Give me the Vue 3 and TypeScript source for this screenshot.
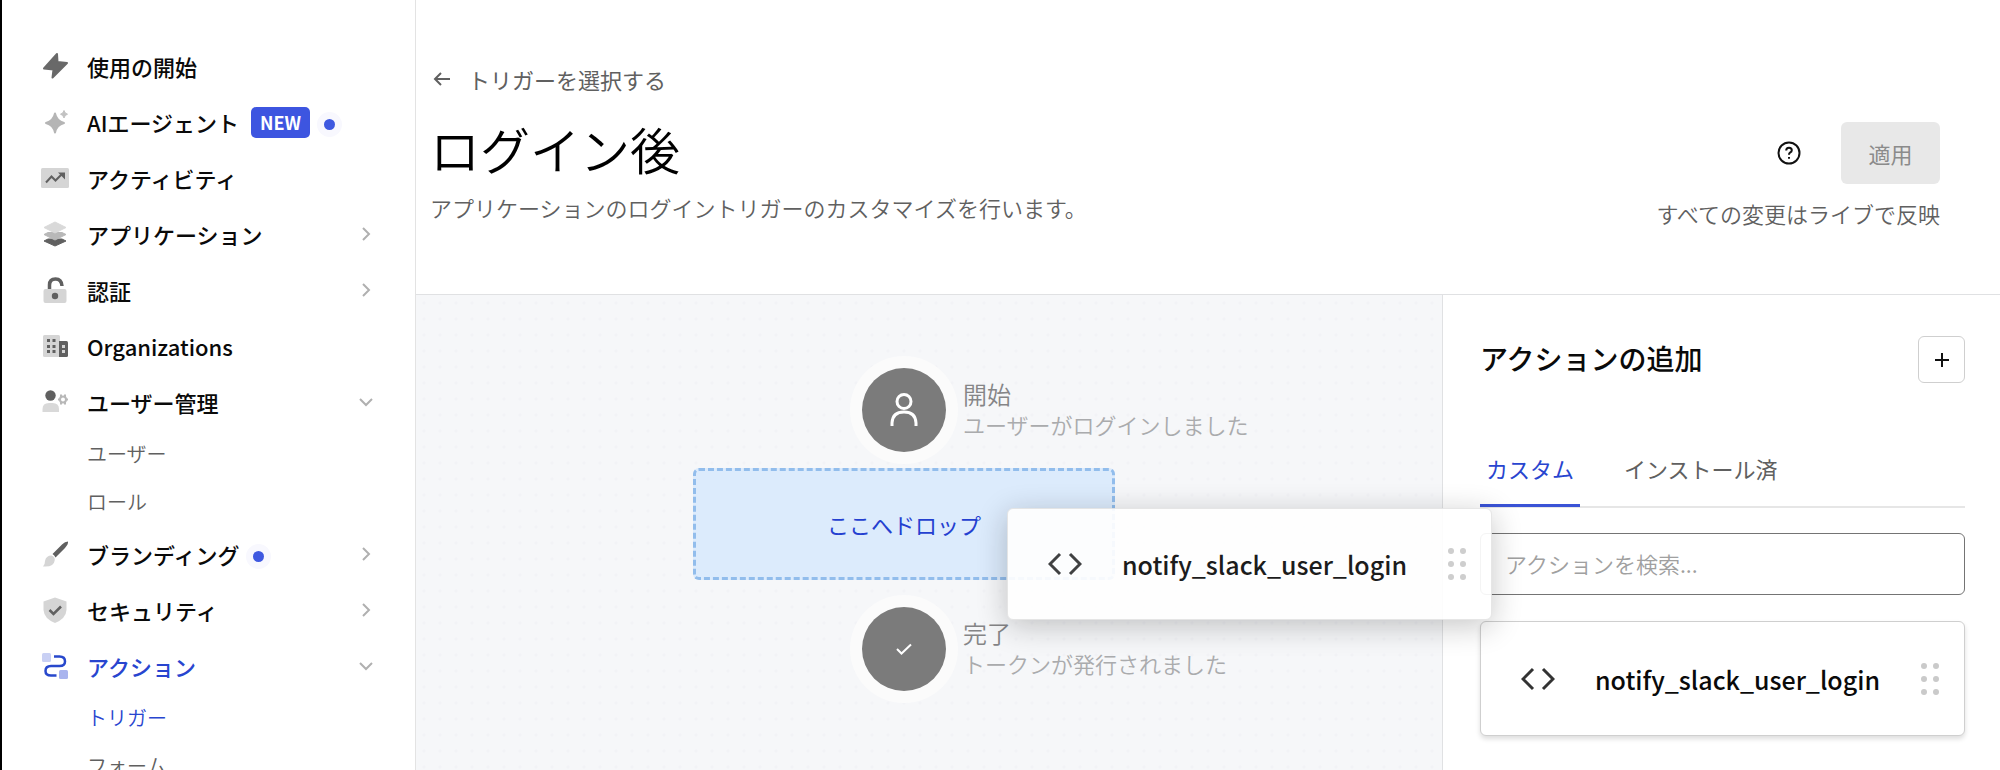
<script setup lang="ts">
import { ref } from 'vue'

interface NavItem {
  id: string
  label: string
  badge?: string
  dot?: boolean
  arrow?: 'right' | 'down'
  active?: boolean
  children?: { label: string; active?: boolean }[]
}

const nav: NavItem[] = [
  { id: 'bolt', label: '使用の開始' },
  { id: 'spark', label: 'AIエージェント', badge: 'NEW', dot: true },
  { id: 'activity', label: 'アクティビティ' },
  { id: 'layers', label: 'アプリケーション', arrow: 'right' },
  { id: 'lock', label: '認証', arrow: 'right' },
  { id: 'building', label: 'Organizations' },
  { id: 'users', label: 'ユーザー管理', arrow: 'down', children: [{ label: 'ユーザー' }, { label: 'ロール' }] },
  { id: 'brush', label: 'ブランディング', dot: true, arrow: 'right' },
  { id: 'shield', label: 'セキュリティ', arrow: 'right' },
  {
    id: 'flow',
    label: 'アクション',
    arrow: 'down',
    active: true,
    children: [{ label: 'トリガー', active: true }, { label: 'フォーム' }],
  },
]

const tabs = ['カスタム', 'インストール済']
const activeTab = ref(0)
const query = ref('')
const actionName = 'notify_slack_user_login'
</script>

<template>
  <div class="app">
    <nav class="sidebar">
      <template v-for="item in nav" :key="item.id">
        <a href="#" class="nav-item" :class="{ active: item.active }">
          <svg class="nav-icon" viewBox="0 0 28 28" aria-hidden="true">
            <template v-if="item.id === 'bolt'">
              <path d="M16 2 L3 16.500 L12.500 17.500 L11.500 25.500 L26 11 L16.500 10Z" fill="#696969" stroke="#696969" stroke-width="2" stroke-linejoin="round" />
            </template>
            <template v-else-if="item.id === 'spark'">
              <path d="M14 5.500 Q15.500 13 23 15 Q15.500 17 14 24.500 Q12.500 17 5 15 Q12.500 13 14 5.500Z" fill="#b5b5b5" stroke="#b5b5b5" stroke-width="2" stroke-linejoin="round" />
              <path d="M23 2.500 Q23.700 5.500 26.500 6.200 Q23.700 6.900 23 10 Q22.300 6.900 19.500 6.200 Q22.300 5.500 23 2.500Z" fill="#c2c2c2" stroke="#c2c2c2" stroke-linejoin="round" />
            </template>
            <template v-else-if="item.id === 'activity'">
              <rect x="0" y="4" width="28" height="20" rx="1.500" fill="#d5d5d5" />
              <path d="M5 18.500 L10.500 12.500 L14.500 16.500 L20.500 10.500" fill="none" stroke="#606060" stroke-width="2" />
              <path d="M17 8.500 H24 V15.500Z" fill="#606060" />
            </template>
            <template v-else-if="item.id === 'layers'">
              <path d="M3 21 L14 26 L25 21 L21 19 H7Z" fill="#606060" stroke="#606060" stroke-linejoin="round" />
              <path d="M3 14.500 L14 20 L25 14.500 L21 12.500 H7Z" fill="#b8b8b8" stroke="#b8b8b8" stroke-linejoin="round" />
              <path d="M3 7.500 L14 2 L25 7.500 L14 13Z" fill="#d9d9d9" stroke="#d9d9d9" stroke-linejoin="round" />
            </template>
            <template v-else-if="item.id === 'lock'">
              <rect x="2.500" y="13" width="23" height="14" rx="2" fill="#d5d5d5" />
              <path d="M8.500 13 V9 Q8.500 3 14.500 3 Q20.500 3 21 10" fill="none" stroke="#606060" stroke-width="3.500" />
              <circle cx="14" cy="20" r="3.200" fill="#606060" />
            </template>
            <template v-else-if="item.id === 'building'">
              <rect x="2" y="3" width="17" height="22" rx="1.500" fill="#d5d5d5" />
              <path d="M18 9 H25.500 Q27 9 27 10.500 V23.500 Q27 25 25.500 25 H18Z" fill="#606060" />
              <path d="M6 7h3v3H6z M11.500 7h3v3h-3z M6 13h3v3H6z M11.500 13h3v3h-3z M6 18h3v3H6z M11.500 18h3v3h-3z" fill="#606060" />
              <path d="M21 13h3v3h-3z M21 18h3v3h-3z" fill="#d5d5d5" />
            </template>
            <template v-else-if="item.id === 'users'">
              <circle cx="9.500" cy="7.500" r="5.200" fill="#606060" />
              <path d="M1.500 24 V21 Q1.500 15 8 15 H11.500 Q18 15 18 21 V24Z" fill="#d9d9d9" />
              <circle cx="22" cy="11.500" r="3" fill="none" stroke="#b8b8b8" stroke-width="2" />
              <path d="M20 6.500v3 M24 6.500v3 M20 13.500v3 M24 13.500v3 M17 11.500h2 M25 11.500h2" stroke="#b8b8b8" stroke-width="2" />
            </template>
            <template v-else-if="item.id === 'brush'">
              <path d="M27 1.500 Q24 1.500 21 4.500 L11.500 14 Q13.500 15 14.500 17.500 L24 8 Q27.500 4 27 1.500Z" fill="#606060" />
              <path d="M10.500 15.500 Q14 16.500 13.800 20 Q13 27.500 2 26.500 Q4 25 4 21 Q5 15.500 10.500 15.500Z" fill="#d5d5d5" />
            </template>
            <template v-else-if="item.id === 'shield'">
              <path d="M14 1.500 L25.500 5.500 V14 Q25 22.500 14 27 Q3 22.500 2.500 14 V5.500Z" fill="#d5d5d5" />
              <path d="M8.500 14 L12.500 18 L20 10.500" fill="none" stroke="#606060" stroke-width="2.500" />
            </template>
            <template v-else>
              <rect x="1" y="1" width="9" height="9" rx="1.500" fill="#c9d0f4" />
              <rect x="18" y="18" width="9" height="9" rx="1.500" fill="#a9b4ee" />
              <path d="M13 4.500 H18.500 Q24 4.500 24 9.500 Q24 14 18.500 14 H10 Q4.500 14 4.500 19 Q4.500 23.500 10 23.500 H15.500" fill="none" stroke="#2848cc" stroke-width="2.500" />
            </template>
          </svg>
          <span>{{ item.label }}</span>
          <span v-if="item.badge" class="badge">{{ item.badge }}</span>
          <span v-if="item.dot" class="dot"></span>
          <svg v-if="item.arrow" class="chevron" viewBox="0 0 14 14" aria-hidden="true">
            <path :d="item.arrow === 'right' ? 'M4 1 L10 7 L4 13' : 'M1 4 L7 10 L13 4'" />
          </svg>
        </a>
        <div v-if="item.children" class="sub-nav">
          <a v-for="child in item.children" :key="child.label" href="#" :class="{ active: child.active }">{{ child.label }}</a>
        </div>
      </template>
    </nav>

    <main class="main">
      <header class="header">
        <div class="heading">
          <a href="#" class="back">
            <svg viewBox="0 0 18 18" aria-hidden="true"><path d="M17 9 H2 M8 3 L2 9 L8 15" /></svg>
            <span>トリガーを選択する</span>
          </a>
          <h1>ログイン後</h1>
          <p>アプリケーションのログイントリガーのカスタマイズを行います。</p>
        </div>
        <div class="publish">
          <div class="publish-row">
            <button type="button" class="help" aria-label="ヘルプ">
              <svg viewBox="0 0 24 24" aria-hidden="true">
                <circle cx="12" cy="12" r="10.500" />
                <path d="M9.200 9.500 Q9.200 6.700 12 6.700 Q14.800 6.700 14.800 9.300 Q14.800 10.800 13 11.700 Q12 12.300 12 13.800" />
                <path d="M12 16 V17.800" />
              </svg>
            </button>
            <button type="button" class="apply" disabled>適用</button>
          </div>
          <p>すべての変更はライブで反映</p>
        </div>
      </header>

      <div class="workspace">
        <section class="canvas">
          <div class="flow">
            <div class="node">
              <span class="node-circle">
                <svg viewBox="0 0 32 36" aria-hidden="true">
                  <circle cx="16" cy="9.500" r="7" />
                  <path d="M4 34 V31 Q4.500 20 16 20 Q27.500 20 28 31 V34" />
                </svg>
              </span>
              <div class="node-text"><strong>開始</strong><span>ユーザーがログインしました</span></div>
            </div>
            <div class="drop-zone">ここへドロップ</div>
            <div class="node">
              <span class="node-circle check">
                <svg viewBox="0 0 16 12" aria-hidden="true"><path d="M1 6 L5.500 10.500 L15 1.500" /></svg>
              </span>
              <div class="node-text"><strong>完了</strong><span>トークンが発行されました</span></div>
            </div>
          </div>
        </section>

        <aside class="panel">
          <div class="panel-head">
            <h2>アクションの追加</h2>
            <button type="button" class="add" aria-label="アクションを作成">
              <svg viewBox="0 0 16 16" aria-hidden="true"><path d="M8 1 V15 M1 8 H15" /></svg>
            </button>
          </div>
          <div class="tabs" role="tablist">
            <button
              v-for="(tab, i) in tabs"
              :key="tab"
              type="button"
              role="tab"
              :aria-selected="activeTab === i"
              :class="{ selected: activeTab === i }"
              @click="activeTab = i"
            >{{ tab }}</button>
          </div>
          <div class="stack">
            <input v-model="query" type="text" class="search" placeholder="アクションを検索..." aria-label="アクションを検索" />
            <div v-for="kind in ['', 'dragging']" :key="kind" class="action-card" :class="kind">
              <svg class="code" viewBox="0 0 34 24" aria-hidden="true"><path d="M12 2 L2 12 L12 22 M22 2 L32 12 L22 22" /></svg>
              <span>{{ actionName }}</span>
              <svg class="grip" viewBox="0 0 20 32" aria-hidden="true">
                <template v-for="y in [3, 16, 29]" :key="y">
                  <circle cx="4" :cy="y" r="3" /><circle cx="16" :cy="y" r="3" />
                </template>
              </svg>
            </div>
          </div>
        </aside>
      </div>
    </main>
  </div>
</template>

<style>
body {
  margin: 0;
}
</style>

<style scoped>
.app {
  display: flex;
  height: 100vh;
  overflow: hidden;
  background: #fff;
  color: #0a0a0a;
  font-family: "Noto Sans CJK JP", sans-serif;
  font-size: 22px;
  line-height: 32px;
}
.app * {
  box-sizing: border-box;
}
a {
  color: inherit;
  text-decoration: none;
}
button {
  font: inherit;
  cursor: pointer;
}
h1, h2, p {
  margin: 0;
}
svg {
  display: block;
  flex: none;
}
.sidebar {
  flex: none;
  width: 416px;
  padding-top: 38px;
  border-left: 2px solid #000;
  border-right: 1px solid #e3e3e3;
  overflow: hidden;
}
.nav-item {
  display: flex;
  align-items: center;
  height: 56px;
  padding: 0 42px 0 39px;
  font-weight: 500;
}
.nav-item > span:first-of-type {
  padding-bottom: 1px;
}
.nav-icon {
  width: 28px;
  height: 28px;
  margin-right: 18px;
}
.active {
  color: #2845cf;
}
.badge {
  height: 31px;
  margin-left: 12px;
  padding: 0 9px;
  border-radius: 5px;
  background: #3d55e0;
  color: #fff;
  font-size: 18px;
  font-weight: 700;
  line-height: 31px;
}
.dot {
  width: 11px;
  height: 11px;
  margin: 4px 0 0 14px;
  border-radius: 50%;
  background: #3f59e0;
  box-shadow: 0 0 0 7px #f8f8fe;
}
.chevron {
  width: 14px;
  height: 14px;
  margin-left: auto;
  fill: none;
  stroke: #b0b0b0;
  stroke-width: 2;
}
.sub-nav {
  padding-left: 85px;
  font-size: 20px;
}
.sub-nav a {
  display: block;
  height: 48px;
  line-height: 48px;
  color: #606060;
}
.sub-nav a.active {
  color: #2845cf;
}
.main {
  display: flex;
  flex: 1;
  flex-direction: column;
  min-width: 0;
}
.header {
  display: flex;
  flex: none;
  justify-content: space-between;
  height: 295px;
  padding: 63px 60px 0 14px;
  border-bottom: 1px solid #e0e1e3;
  color: #606060;
}
.back {
  display: flex;
  align-items: center;
  gap: 17px;
}
.back svg {
  width: 18px;
  height: 18px;
  margin-left: 3px;
  fill: none;
  stroke: #606060;
  stroke-width: 2;
}
h1 {
  margin-top: 17px;
  color: #000;
  font-size: 50px;
  font-weight: 350;
  line-height: 72px;
}
.heading p {
  margin-top: 7px;
}
.heading p,
.publish p,
.node-text,
.sub-nav {
  font-weight: 350;
}
.publish {
  padding-top: 59px;
}
.publish-row {
  display: flex;
  justify-content: flex-end;
  align-items: center;
  gap: 40px;
  margin-bottom: 13px;
}
.help {
  padding: 0;
  border: 0;
  background: none;
}
.help svg {
  width: 24px;
  height: 24px;
  fill: none;
  stroke: #111;
  stroke-width: 2;
}
.apply {
  width: 99px;
  height: 62px;
  border: 0;
  border-radius: 6px;
  background: #e8e8e8;
  color: #8b8b8b;
}
.workspace {
  display: flex;
  flex: 1;
  min-height: 0;
}
.canvas {
  flex: 1;
  min-width: 0;
  padding: 73px 50px 0 0;
  background: radial-gradient(circle, #f2f3f6 1px, transparent 2px) 0 0 / 16px 16px #f6f7f9;
}
.flow {
  display: flex;
  flex-direction: column;
  align-items: center;
}
.node {
  position: relative;
}
.node-circle {
  display: flex;
  align-items: center;
  justify-content: center;
  width: 84px;
  height: 84px;
  border-radius: 50%;
  background: #7b7b7b;
  box-shadow: 0 0 0 12px #fbfbfb;
}
.node-circle svg {
  width: 32px;
  height: 36px;
  fill: none;
  stroke: #fff;
  stroke-width: 3;
}
.node-circle.check svg {
  width: 16px;
  height: 12px;
  stroke-width: 2;
}
.node-text {
  position: absolute;
  top: 11px;
  left: 101px;
  line-height: 30px;
  white-space: nowrap;
}
.node-text strong,
.node-text span {
  display: block;
}
.node-text strong {
  color: #858587;
  font-size: 24px;
  font-weight: inherit;
}
.node-text span {
  color: #aaabad;
}
.drop-zone {
  width: 422px;
  height: 112px;
  margin: 16px 0 27px;
  border: 3px dashed #92bdec;
  border-radius: 6px;
  background: #dcebfc;
  color: #2440d0;
  line-height: 106px;
  text-align: center;
}
.panel {
  flex: none;
  width: 558px;
  padding: 41px 35px 0 37px;
  border-left: 1px solid #e0e1e3;
  background: #fff;
}
.panel-head {
  display: flex;
  align-items: center;
  justify-content: space-between;
}
h2 {
  padding-bottom: 4px;
  font-size: 28px;
  font-weight: 500;
}
.add {
  display: grid;
  place-items: center;
  width: 47px;
  height: 47px;
  padding: 0;
  border: 1px solid #cfcfcf;
  border-radius: 6px;
  background: #fff;
}
.add svg {
  width: 16px;
  height: 16px;
  stroke: #111;
  stroke-width: 2;
}
.tabs {
  display: flex;
  gap: 38px;
  margin-top: 54px;
  border-bottom: 2px solid #e6e6e6;
}
.tabs button {
  height: 70px;
  margin-bottom: -1px;
  padding: 0 6px 6px;
  border: 0;
  border-bottom: 3px solid transparent;
  background: none;
  color: #606060;
}
.tabs button.selected {
  border-bottom-color: #3a53d6;
  color: #2845cf;
}
.stack {
  position: relative;
  padding-top: 25px;
}
.search {
  display: block;
  width: 100%;
  height: 62px;
  margin-bottom: 26px;
  padding: 0 24px 2px;
  border: 1px solid #747474;
  border-radius: 6px;
  background: #fff;
  font: inherit;
}
.search::placeholder {
  color: #a0a0a0;
  font-weight: 350;
  opacity: 1;
}
.action-card {
  display: flex;
  align-items: center;
  width: 100%;
  height: 115px;
  padding: 0 24px 0 40px;
  border: 1px solid #cfcfcf;
  border-radius: 6px;
  background: #fff;
  box-shadow: 0 3px 5px #0002;
  font-size: 25px;
  font-weight: 500;
}
.code {
  width: 34px;
  height: 24px;
  margin-right: 40px;
  fill: none;
  stroke: #333;
  stroke-width: 3;
}
.grip {
  width: 20px;
  height: 32px;
  margin-left: auto;
  fill: #cacaca;
}
.dragging {
  position: absolute;
  top: 0;
  left: -473px;
  height: 112px;
  border-color: #e4e4e4;
  box-shadow: 0 6px 30px #0000003d;
  opacity: 0.92;
}
</style>
